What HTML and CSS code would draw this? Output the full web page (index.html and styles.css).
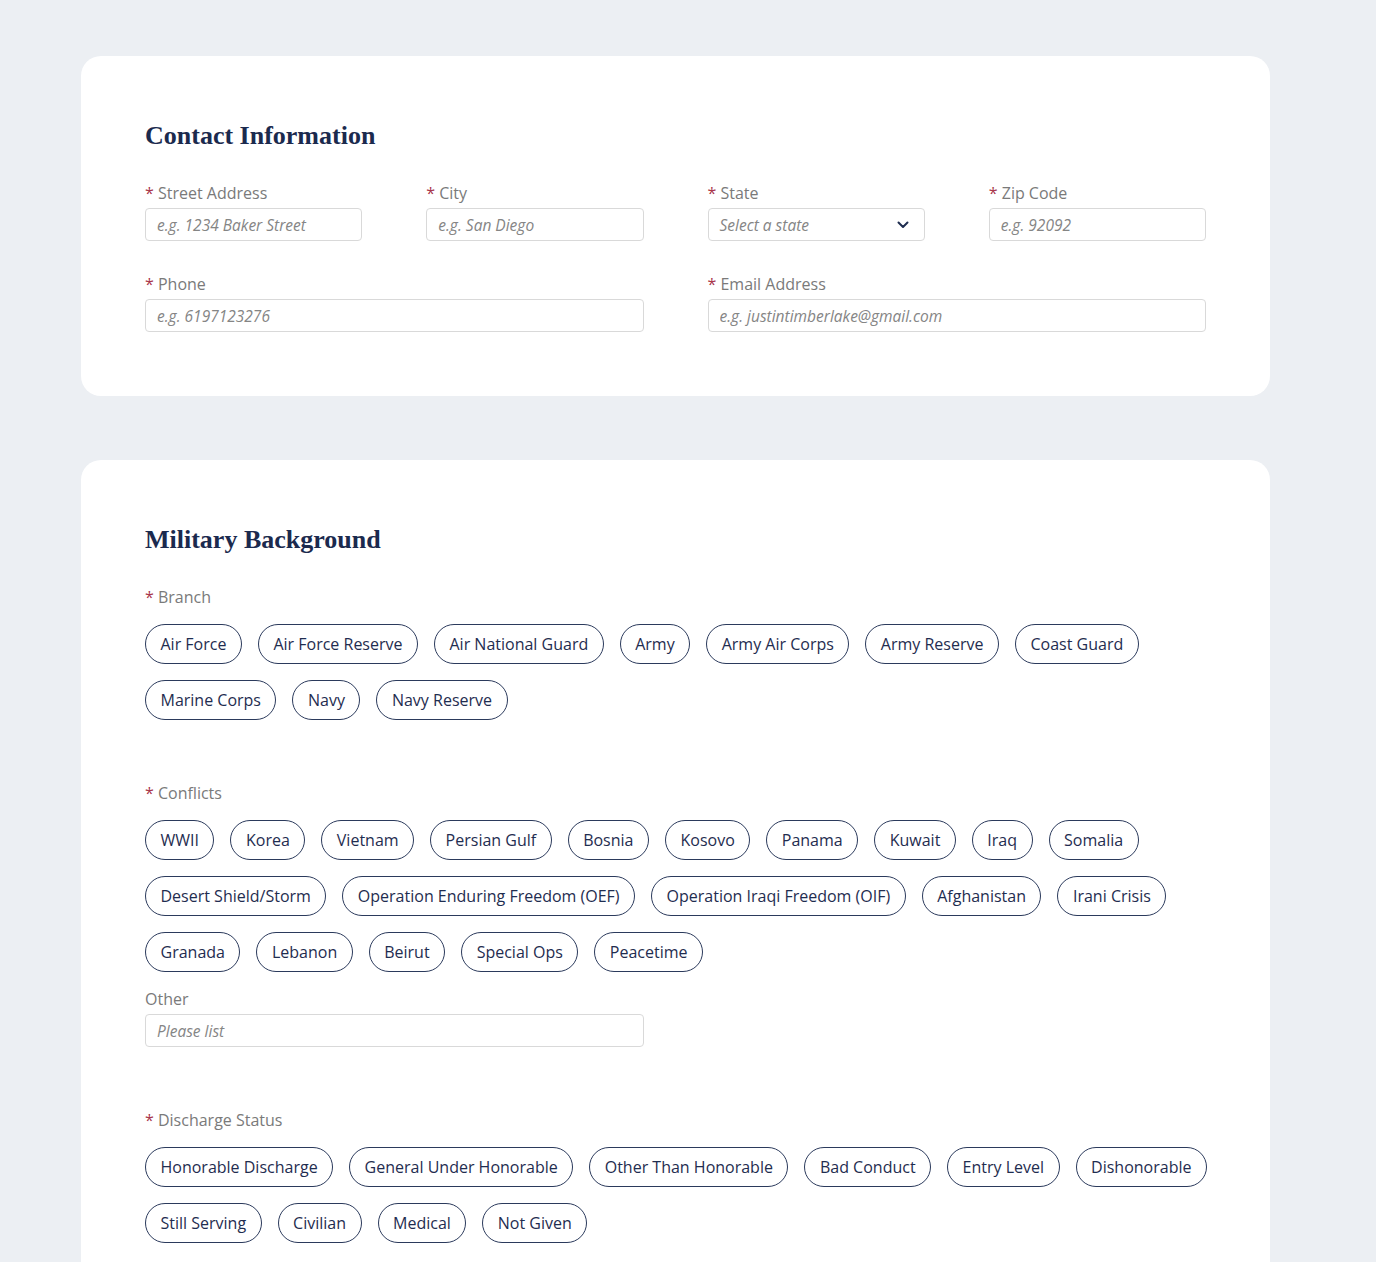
FILE: index.html
```html
<!DOCTYPE html>
<html lang="en">
<head>
<meta charset="utf-8">
<title>Form</title>
<link rel="stylesheet" href="styles.css">
</head>
<body>
<main class="page">
  <section class="card">
    <h2 class="card-title">Contact Information</h2>
    <div class="grid">
      <div class="field">
        <label class="label"><span class="req">*</span> Street Address</label>
        <input class="input" placeholder="e.g. 1234 Baker Street">
      </div>
      <div class="field">
        <label class="label"><span class="req">*</span> City</label>
        <input class="input" placeholder="e.g. San Diego">
      </div>
      <div class="field">
        <label class="label"><span class="req">*</span> State</label>
        <div class="select">
          <span class="select-text">Select a state</span>
          <svg class="chev" width="12" height="8" viewBox="0 0 12 8"><path d="M1.5 1.5 L6 6 L10.5 1.5" fill="none" stroke="#1f2d50" stroke-width="2" stroke-linecap="round" stroke-linejoin="round"/></svg>
        </div>
      </div>
      <div class="field">
        <label class="label"><span class="req">*</span> Zip Code</label>
        <input class="input" placeholder="e.g. 92092">
      </div>
      <div class="field span2">
        <label class="label"><span class="req">*</span> Phone</label>
        <input class="input" placeholder="e.g. 6197123276">
      </div>
      <div class="field span2">
        <label class="label"><span class="req">*</span> Email Address</label>
        <input class="input" placeholder="e.g. justintimberlake@gmail.com">
      </div>
    </div>
  </section>

  <section class="card">
    <h2 class="card-title">Military Background</h2>

    <div class="group">
      <div class="label"><span class="req">*</span> Branch</div>
      <div class="chips">
        <span class="chip">Air Force</span>
        <span class="chip">Air Force Reserve</span>
        <span class="chip">Air National Guard</span>
        <span class="chip">Army</span>
        <span class="chip">Army Air Corps</span>
        <span class="chip">Army Reserve</span>
        <span class="chip">Coast Guard</span>
        <span class="chip">Marine Corps</span>
        <span class="chip">Navy</span>
        <span class="chip">Navy Reserve</span>
      </div>
    </div>

    <div class="group">
      <div class="label"><span class="req">*</span> Conflicts</div>
      <div class="chips">
        <span class="chip">WWII</span>
        <span class="chip">Korea</span>
        <span class="chip">Vietnam</span>
        <span class="chip">Persian Gulf</span>
        <span class="chip">Bosnia</span>
        <span class="chip">Kosovo</span>
        <span class="chip">Panama</span>
        <span class="chip">Kuwait</span>
        <span class="chip">Iraq</span>
        <span class="chip">Somalia</span>
        <span class="chip">Desert Shield/Storm</span>
        <span class="chip">Operation Enduring Freedom (OEF)</span>
        <span class="chip">Operation Iraqi Freedom (OIF)</span>
        <span class="chip">Afghanistan</span>
        <span class="chip">Irani Crisis</span>
        <span class="chip">Granada</span>
        <span class="chip">Lebanon</span>
        <span class="chip">Beirut</span>
        <span class="chip">Special Ops</span>
        <span class="chip">Peacetime</span>
      </div>
      <div class="other">
        <label class="label">Other</label>
        <input class="input" placeholder="Please list">
      </div>
    </div>

    <div class="group">
      <div class="label"><span class="req">*</span> Discharge Status</div>
      <div class="chips">
        <span class="chip">Honorable Discharge</span>
        <span class="chip">General Under Honorable</span>
        <span class="chip">Other Than Honorable</span>
        <span class="chip">Bad Conduct</span>
        <span class="chip">Entry Level</span>
        <span class="chip">Dishonorable</span>
        <span class="chip">Still Serving</span>
        <span class="chip">Civilian</span>
        <span class="chip">Medical</span>
        <span class="chip">Not Given</span>
      </div>
    </div>
  </section>
</main>
</body>
</html>
```

FILE: styles.css
```css
* { box-sizing: border-box; }

html, body {
  margin: 0;
  padding: 0;
  background: #eceff3;
  font-family: "Open Sans", "Noto Sans", sans-serif;
  color: #1f2d50;
}

.page {
  width: 1189px;
  margin-left: 81px;
  padding-top: 56px;
  padding-bottom: 64px;
  display: flex;
  flex-direction: column;
  gap: 64px;
}

.card {
  background: #ffffff;
  border-radius: 20px;
  padding: 64px;
}

.card-title {
  margin: 0 0 30px;
  font-family: "Liberation Serif", "DejaVu Serif", serif;
  font-weight: 700;
  font-size: 26px;
  line-height: 32px;
  color: #1b2a4e;
}

.grid {
  display: grid;
  grid-template-columns: repeat(4, 1fr);
  column-gap: 64px;
  row-gap: 32px;
}

.span2 { grid-column: span 2; }

.field {
  display: flex;
  flex-direction: column;
  gap: 4px;
}

.label {
  display: block;
  font-size: 16px;
  line-height: 22px;
  color: #7a7a7a;
}

.req { color: #a8354a; }

.input, .select {
  height: 33px;
  width: 100%;
  border: 1px solid #d9d9d9;
  border-radius: 4px;
  padding: 0 11px;
  font-family: "Open Sans", "Noto Sans", sans-serif;
  font-size: 15.5px;
  font-style: italic;
  color: #333;
  background: #fff;
  outline: none;
}

.input::placeholder {
  color: #858585;
  font-style: italic;
}

.select {
  display: flex;
  align-items: center;
  justify-content: space-between;
  padding-right: 15px;
}

.select-text {
  color: #858585;
  font-style: italic;
}

.group + .group { margin-top: 62px; }

.chips {
  margin-top: 16px;
  margin-right: -6px;
  display: flex;
  flex-wrap: wrap;
  gap: 16px;
}

.chip {
  display: inline-flex;
  align-items: center;
  height: 40px;
  padding: 0 14.5px;
  border: 1px solid #2b3a5c;
  border-radius: 20px;
  font-size: 16px;
  color: #1f2d50;
  white-space: nowrap;
}

.other {
  margin-top: 16px;
  width: calc(50% - 32px);
  display: flex;
  flex-direction: column;
  gap: 4px;
}
```
